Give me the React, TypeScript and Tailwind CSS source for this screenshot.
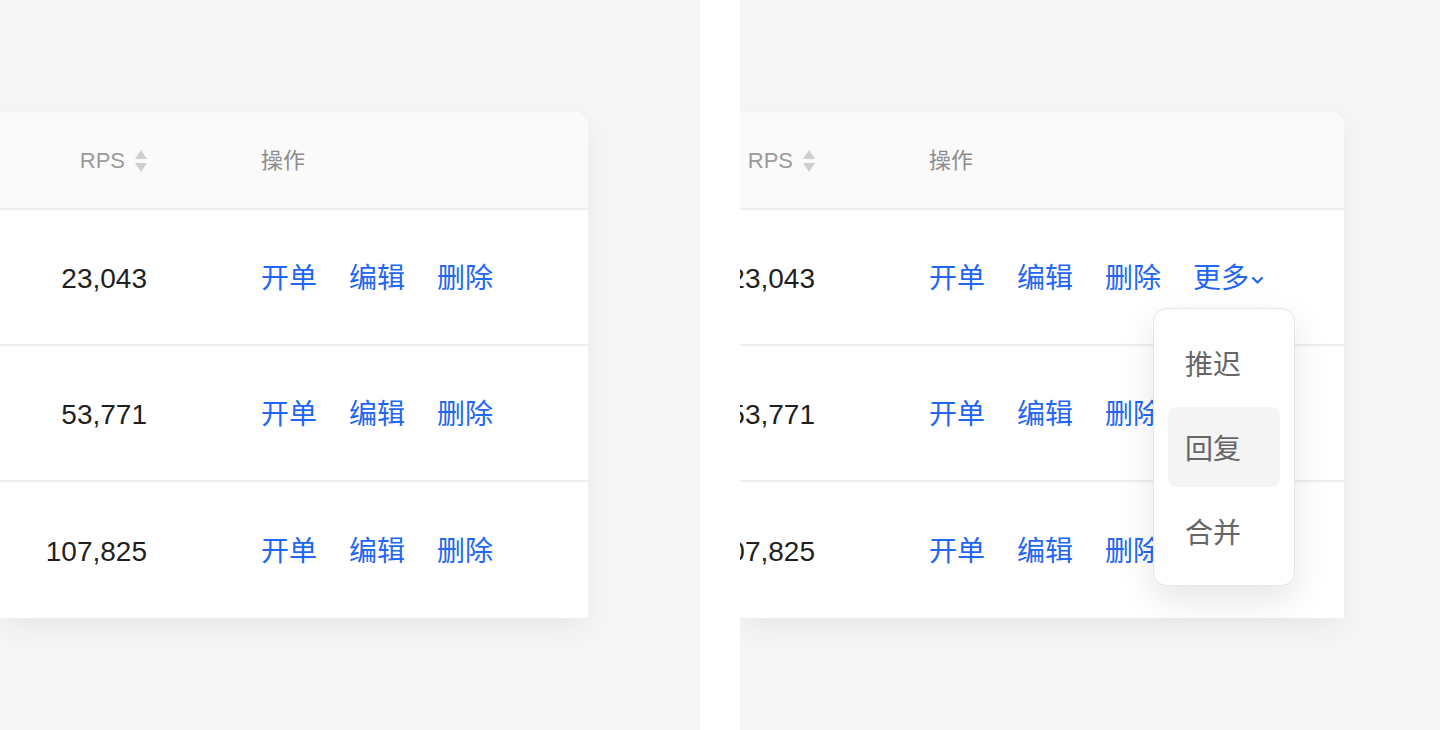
import React from 'react';

const rows = [ '23,043', '53,771', '107,825' ];

const font = 'font-["Liberation_Sans","Noto_Sans_CJK_SC",sans-serif]';

const SortIcon = () => (
    <svg width="12" height="22" viewBox="0 0 12 22" className="ml-[10px]">
        <path d="M6 0 L12 9 L0 9 Z" fill="#cfcfcf"/>
        <path d="M0 13 L12 13 L6 22 Z" fill="#cfcfcf"/>
    </svg>
);

const Chevron = () => (
    <svg width="13" height="9" viewBox="0 0 13 9" className="ml-[2px] mt-[2px]">
        <path d="M2 2 L6.5 6.5 L11 2" fill="none" stroke="#2266f5" strokeWidth="2.2" strokeLinecap="round" strokeLinejoin="round"/>
    </svg>
);

const Table = ( { numWidth, more }: { numWidth: string; more?: boolean } ) => (
    <div className="bg-white rounded-tr-[14px] overflow-hidden shadow-[0_10px_30px_rgba(0,0,0,0.06)]">
        <div className="h-[98px] pt-[2px] bg-[#fafafa] border-b-2 border-[#eeeeee] flex items-center">
            <div className={ `${ numWidth } shrink-0 flex items-center justify-end whitespace-nowrap` }>
                <span className="text-[22px] leading-none text-[#9a9a9a]">RPS</span>
                <SortIcon/>
            </div>
            <div className="ml-[114px] text-[22px] leading-none text-[#8c8c8c]">操作</div>
        </div>
        { rows.map( ( n, i ) => (
            <div key={ n }
                 className={ i < rows.length - 1 ? 'h-[136px] pt-[4px] border-b-2 border-[#eeeeee] flex items-center' : 'h-[136px] pt-[4px] flex items-center' }>
                <div className={ `${ numWidth } shrink-0 flex justify-end whitespace-nowrap text-[28px] leading-none text-[#1f1f1f]` }>
                    { n }
                </div>
                <div className="ml-[114px] flex items-center gap-[32px] text-[28px] leading-none text-[#2266f5]">
                    <span>开单</span>
                    <span>编辑</span>
                    <span>删除</span>
                    { more && i === 0 && (
                        <span className="flex items-center">更多<Chevron/></span>
                    ) }
                </div>
            </div>
        ) ) }
    </div>
);

export default function App() {
    return (
        <div className={ `flex w-[1440px] h-[730px] ${ font }` }>

            <div className="w-[700px] h-full bg-[#f6f6f6] overflow-hidden pt-[112px]">
                <div className="w-[588px]">
                    <Table numWidth="w-[147px]"/>
                </div>
            </div>

            <div className="w-[40px] h-full bg-white"/>

            <div className="relative flex-1 h-full bg-[#f6f6f6] overflow-hidden pt-[112px]">
                <div className="w-[604px]">
                    <Table numWidth="w-[75px]" more/>
                </div>

                <div className="absolute left-[413px] top-[308px] w-[142px] p-[14px] bg-white border border-[#e6e6e6] rounded-[14px] shadow-[0_14px_36px_rgba(0,0,0,0.10)] flex flex-col gap-[4px]">
                    <div className="h-[80px] pt-[5px] flex items-center pl-[17px] rounded-[8px] text-[28px] leading-none text-[#666666]">推迟</div>
                    <div className="h-[80px] pt-[5px] flex items-center pl-[17px] rounded-[8px] bg-[#f4f4f4] text-[28px] leading-none text-[#666666]">回复</div>
                    <div className="h-[80px] pt-[5px] flex items-center pl-[17px] rounded-[8px] text-[28px] leading-none text-[#666666]">合并</div>
                </div>
            </div>

        </div>
    );
}
